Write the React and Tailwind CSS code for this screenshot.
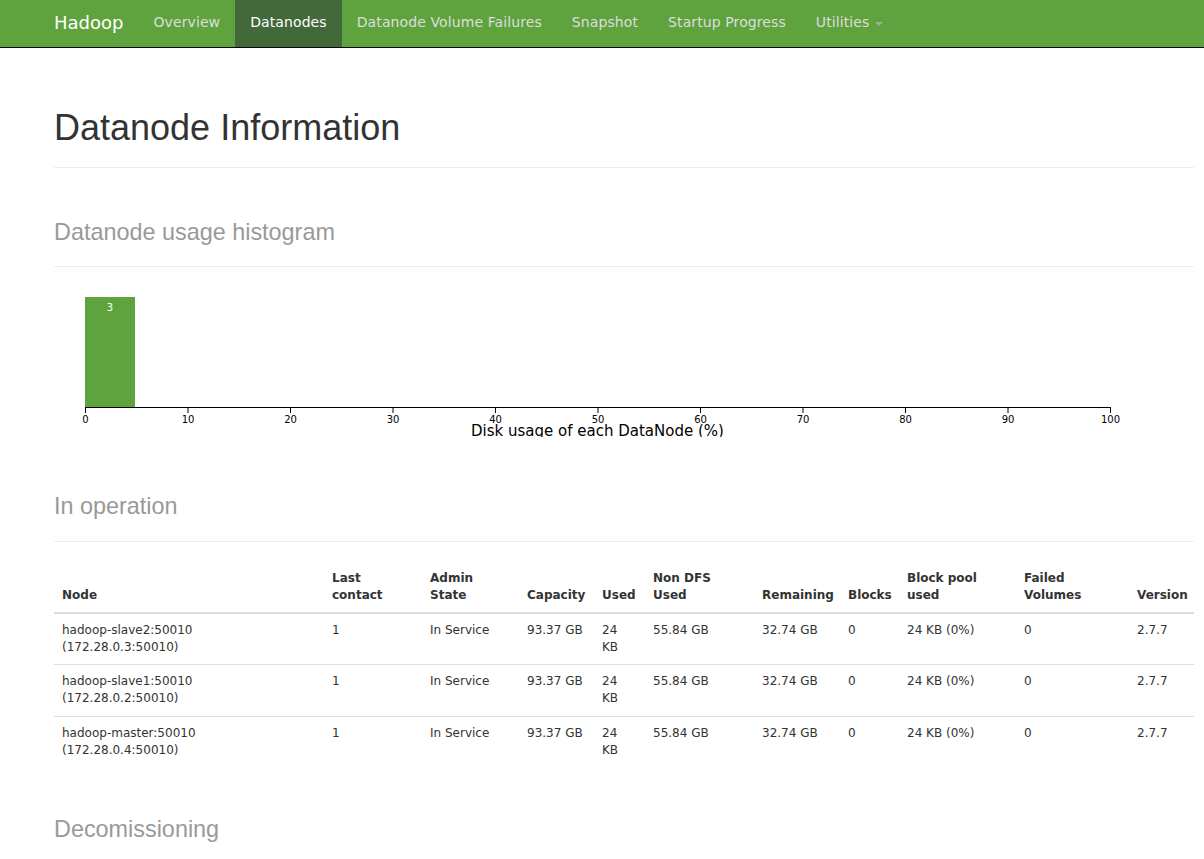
const navItems = [
  { label: "Overview" },
  { label: "Datanodes", active: true },
  { label: "Datanode Volume Failures" },
  { label: "Snapshot" },
  { label: "Startup Progress" },
];

const columns = [
  { title: ["Node"], width: 270 },
  { title: ["Last", "contact"], width: 98 },
  { title: ["Admin", "State"], width: 97 },
  { title: ["Capacity"], width: 75 },
  { title: ["Used"], width: 51 },
  { title: ["Non DFS", "Used"], width: 109 },
  { title: ["Remaining"], width: 86 },
  { title: ["Blocks"], width: 59 },
  { title: ["Block pool", "used"], width: 117 },
  { title: ["Failed", "Volumes"], width: 113 },
  { title: ["Version"], width: 65 },
];

const datanodes = [
  { name: "hadoop-slave2:50010", addr: "(172.28.0.3:50010)" },
  { name: "hadoop-slave1:50010", addr: "(172.28.0.2:50010)" },
  { name: "hadoop-master:50010", addr: "(172.28.0.4:50010)" },
];

const PageHeader = ({ children, small, className = "" }) => (
  <div className={`border-b border-[#eee] pb-[9px] ${className}`}>
    <h1
      className="mb-[10px] text-[36px] leading-[1.1] font-normal text-[#333]"
      style={{ fontFamily: '"Liberation Sans", Arial, sans-serif' }}
    >
      {small ? <small className="text-[23.4px] text-[#999]">{children}</small> : children}
    </h1>
  </div>
);

const Histogram = () => {
  const ticks = [0, 10, 20, 30, 40, 50, 60, 70, 80, 90, 100];
  return (
    <svg width="1140" height="150" className="block" style={{ fontFamily: '"DejaVu Sans", sans-serif' }}>
      <rect x="31" y="10" width="50" height="110" fill="#5fa33e" />
      <text x="56" y="24" fontSize="10" fill="#fff" textAnchor="middle">
        3
      </text>
      <line x1="31" y1="120.5" x2="1056" y2="120.5" stroke="#000" strokeWidth="1" />
      {ticks.map((t, i) => {
        const x = 31.5 + i * 102.5;
        return (
          <g key={t}>
            <line x1={x} y1="120" x2={x} y2="126" stroke="#000" strokeWidth="1" />
            <text x={x} y="136" fontSize="10" fill="#000" textAnchor="middle">
              {t}
            </text>
          </g>
        );
      })}
      <text x="543.5" y="149" fontSize="15" fill="#000" textAnchor="middle">
        Disk usage of each DataNode (%)
      </text>
    </svg>
  );
};

const App = () => {
  return (
    <div className="min-h-[859px] bg-white text-[#333]" style={{ fontFamily: '"DejaVu Sans", sans-serif' }}>
      <nav className="h-[48px] bg-[#5fa33e] border-b border-[#080808] flex items-stretch pl-[39px]">
        <div className="flex items-center px-[15px] pb-[2px] text-[18px] text-white">Hadoop</div>
        <ul className="flex items-stretch text-[14px] tracking-[0.1px]">
          {navItems.map((item) => (
            <li
              key={item.label}
              className={`flex items-center px-[15px] pb-[2px] ${
                item.active ? "bg-[#43683a] text-white" : "text-[#ddd]"
              }`}
            >
              {item.label}
            </li>
          ))}
          <li className="flex items-center px-[15px] pb-[2px] text-[#ddd]">
            Utilities
            <span className="ml-[6px] mt-[2px] inline-block w-0 h-0 border-x-[4px] border-x-transparent border-t-[4px] border-t-[#aaa]" />
          </li>
        </ul>
      </nav>

      <div className="pl-[54px] w-[1194px]">
        <PageHeader className="mt-[60px]">Datanode Information</PageHeader>

        <PageHeader small className="mt-[40px]">
          Datanode usage histogram
        </PageHeader>

        <div className="mt-[20px]">
          <Histogram />
        </div>

        <PageHeader small className="mt-[45px]">
          In operation
        </PageHeader>

        <table className="mt-[20px] w-[1140px] table-fixed border-collapse text-[12px] leading-[1.42857]">
          <colgroup>
            {columns.map((c, i) => (
              <col key={i} style={{ width: c.width }} />
            ))}
          </colgroup>
          <thead>
            <tr>
              {columns.map((c, i) => (
                <th
                  key={i}
                  className="p-[8px] text-left align-bottom font-bold border-b-2 border-[#ddd]"
                >
                  {c.title.map((line, j) => (
                    <div key={j}>{line}</div>
                  ))}
                </th>
              ))}
            </tr>
          </thead>
          <tbody>
            {datanodes.map((d) => (
              <tr key={d.name} className="border-t border-[#ddd]">
                <td className="p-[8px] align-top">
                  <div>{d.name}</div>
                  <div>{d.addr}</div>
                </td>
                <td className="p-[8px] align-top">1</td>
                <td className="p-[8px] align-top">In Service</td>
                <td className="p-[8px] align-top">93.37 GB</td>
                <td className="p-[8px] align-top">
                  <div>24</div>
                  <div>KB</div>
                </td>
                <td className="p-[8px] align-top">55.84 GB</td>
                <td className="p-[8px] align-top">32.74 GB</td>
                <td className="p-[8px] align-top">0</td>
                <td className="p-[8px] align-top">24 KB (0%)</td>
                <td className="p-[8px] align-top">0</td>
                <td className="p-[8px] align-top">2.7.7</td>
              </tr>
            ))}
          </tbody>
        </table>

        <div className="mt-[38px]">
          <h1
            className="text-[36px] leading-[1.1] font-normal"
            style={{ fontFamily: '"Liberation Sans", Arial, sans-serif' }}
          >
            <small className="text-[23.4px] text-[#999]">Decomissioning</small>
          </h1>
        </div>
      </div>
    </div>
  );
};

export default App;
